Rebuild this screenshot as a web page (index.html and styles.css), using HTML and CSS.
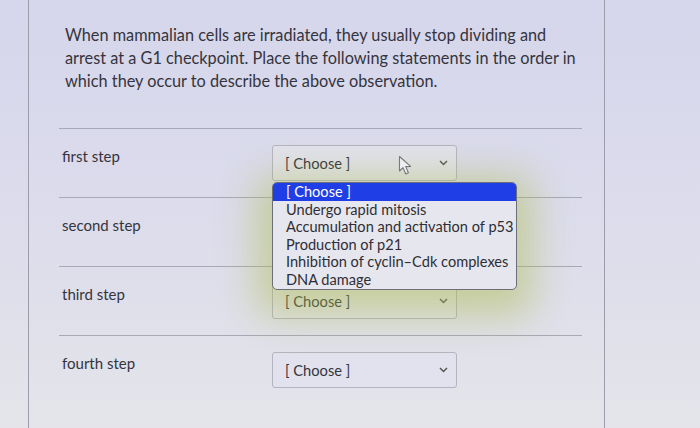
FILE: index.html
```html
<!DOCTYPE html>
<html lang="en">
<head>
  <meta charset="UTF-8" />
  <title>Quiz question</title>
  <link rel="stylesheet" href="styles.css">
</head>
<body>
  <div class="card">
    <p class="question">
      When mammalian cells are irradiated, they usually stop dividing and<br>
      arrest at a G1 checkpoint. Place the following statements in the order in<br>
      which they occur to describe the above observation.
    </p>

    <div class="answers">
      <div class="row">
        <div class="label">first step</div>
        <div class="select-wrap">
          <div class="select">
            <span>[ Choose ]</span>
            <svg class="chev" width="9" height="6" viewBox="0 0 9 6"><path d="M1 1 L4.5 4.5 L8 1" fill="none" stroke="#555" stroke-width="1.5"/></svg>
          </div>
          <svg class="cursor" width="16" height="22" viewBox="0 0 16 22">
            <path d="M1.5 1.5 L1.5 16 L5 12.6 L7.8 19 L10.4 17.8 L7.7 11.6 L12.6 11.4 Z" fill="#eceef4" stroke="#777" stroke-width="1.1" stroke-linejoin="round"/>
          </svg>
          <ul class="options">
            <li class="selected">[ Choose ]</li>
            <li>Undergo rapid mitosis</li>
            <li>Accumulation and activation of p53</li>
            <li>Production of p21</li>
            <li>Inhibition of cyclin–Cdk complexes</li>
            <li>DNA damage</li>
          </ul>
        </div>
      </div>

      <div class="row">
        <div class="label">second step</div>
        <div class="select-wrap">
          <div class="select">
            <span>[ Choose ]</span>
            <svg class="chev" width="9" height="6" viewBox="0 0 9 6"><path d="M1 1 L4.5 4.5 L8 1" fill="none" stroke="#555" stroke-width="1.5"/></svg>
          </div>
        </div>
      </div>

      <div class="row">
        <div class="label">third step</div>
        <div class="select-wrap">
          <div class="select">
            <span>[ Choose ]</span>
            <svg class="chev" width="9" height="6" viewBox="0 0 9 6"><path d="M1 1 L4.5 4.5 L8 1" fill="none" stroke="#555" stroke-width="1.5"/></svg>
          </div>
        </div>
      </div>

      <div class="row">
        <div class="label">fourth step</div>
        <div class="select-wrap">
          <div class="select">
            <span>[ Choose ]</span>
            <svg class="chev" width="9" height="6" viewBox="0 0 9 6"><path d="M1 1 L4.5 4.5 L8 1" fill="none" stroke="#555" stroke-width="1.5"/></svg>
          </div>
        </div>
      </div>
    </div>
  </div>
</body>
</html>
```

FILE: styles.css
```css
/*── page ──*/
body {
  margin: 0;
  height: 428px;
  overflow: hidden;
  font-family: Lato, "Open Sans", sans-serif;
  color: #34343c;
  background: linear-gradient(180deg, #d6d6ec 0%, #dcdcec 50%, #e4e4ea 100%);
}

/*── question card ──*/
.card {
  margin-left: 28px;
  width: 577px;
  height: 428px;
  box-sizing: border-box;
  border-left: 1px solid #9c9caa;
  border-right: 1px solid #9c9caa;
  padding: 0 22px 0 33px;
}
.question {
  margin: 0;
  padding: 23px 0 0 3px;
  font-size: 16.3px;
  line-height: 23px;
  height: 128px;
  box-sizing: border-box;
  white-space: nowrap;
}

/*── answer rows ──*/
.row {
  display: flex;
  align-items: flex-start;
  border-top: 1px solid #a8a8b6;
  padding: 16px 0 16px;
  margin-left: -3px;
}
.label {
  width: 210px;
  padding-top: 1px;
  padding-left: 3px;
  font-size: 15px;
  line-height: 20px;
}
.select-wrap {
  position: relative;
}
.select {
  width: 185px;
  height: 36px;
  box-sizing: border-box;
  border: 1px solid #b4b4c0;
  border-radius: 3px;
  background: #e2e2ee;
  display: flex;
  align-items: center;
  justify-content: space-between;
  padding: 0 8px 0 12px;
  font-size: 14.7px;
}
.chev {
  display: block;
}

/*── cursor ──*/
.cursor {
  position: absolute;
  left: 126px;
  top: 10px;
  z-index: 3;
}

/*── open dropdown ──*/
.options {
  position: absolute;
  left: 0;
  top: 37px;
  width: 245px;
  margin: 0;
  padding: 0;
  list-style: none;
  box-sizing: border-box;
  background: #e6e6ee;
  border: 1px solid #6e6e78;
  border-radius: 5px;
  box-shadow: 0 10px 38px 16px rgba(170, 186, 70, 0.48);
  z-index: 2;
  font-size: 14.6px;
  line-height: 17.6px;
  color: #2e2e36;
}
.options li {
  padding-left: 13px;
  white-space: nowrap;
}
.options li.selected {
  background: #1f3ee6;
  color: #fff;
  border-radius: 4px 4px 0 0;
}
```
